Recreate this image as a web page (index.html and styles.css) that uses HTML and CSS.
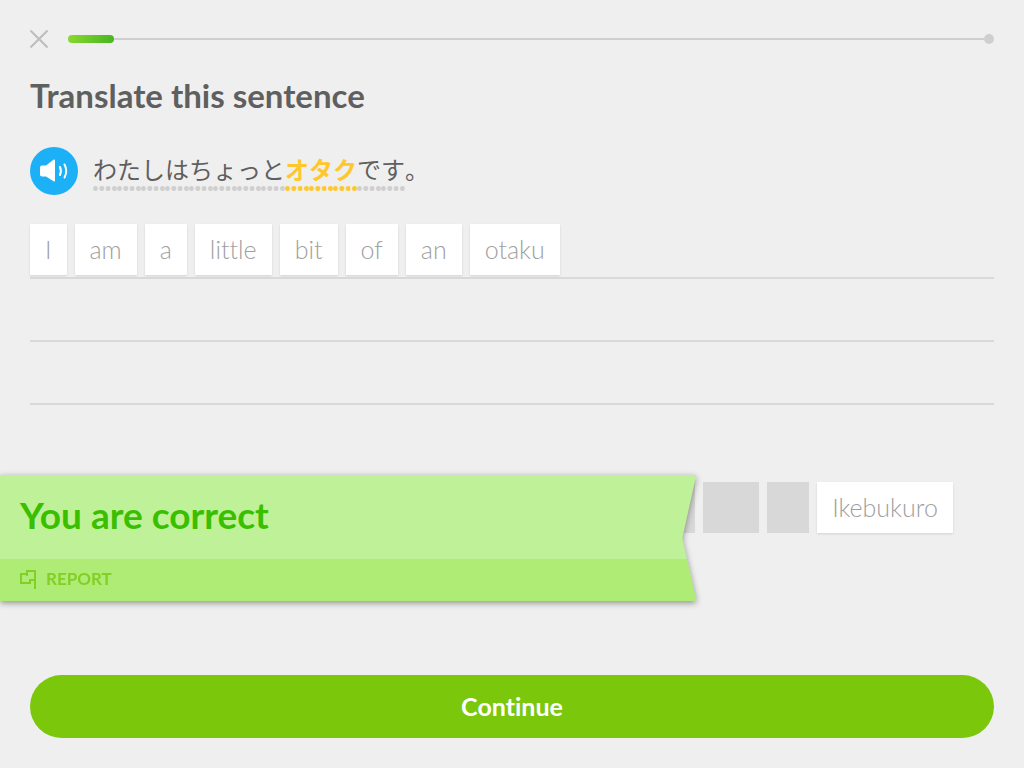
FILE: index.html
```html
<!DOCTYPE html>
<html lang="en">
  <head>
    <meta charset="UTF-8" />
    <meta name="viewport" content="width=device-width, initial-scale=1.0" />
    <title>Translate this sentence</title>
    <link rel="stylesheet" href="styles.css">
  </head>
  <body>
    <header class="lesson-header">
      <button class="close" type="button" aria-label="Close">
        <svg width="18" height="18" viewBox="0 0 18 18">
          <path d="M0.5 0.5L17.5 17.5M17.5 0.5L0.5 17.5" />
        </svg>
      </button>
      <div class="progress" role="progressbar" aria-label="Progress" aria-valuemin="0" aria-valuemax="100" aria-valuenow="5">
        <div class="progress-bar" style="width: 5%"></div>
        <div class="progress-track"></div>
        <div class="progress-end"></div>
      </div>
    </header>

    <main class="challenge">
      <h1>Translate this sentence</h1>

      <div class="prompt">
        <button class="speaker" type="button" aria-label="Listen">
          <svg width="48" height="48" viewBox="0 0 48 48">
            <path class="horn" d="M12 18.500H16L23.500 12.800Q25 11.800 25 13.500V33.500Q25 35.200 23.500 34.200L16 29.500H12Q10 29.500 10 27.500V20.500Q10 18.500 12 18.500Z" />
            <path class="wave" d="M30 20Q31.800 24 30 28M34.500 17.500Q38 24 34.500 30.500" />
          </svg>
        </button>
        <p class="sentence" lang="ja"><span>わ</span><span>た</span><span>し</span><span>は</span><span>ち</span><span>ょ</span><span>っ</span><span>と</span><span class="new">オ</span><span class="new">タ</span><span class="new">ク</span><span>で</span><span>す</span>。</p>
      </div>

      <div class="answer">
        <div class="answer-line">
          <button class="tile" type="button">I</button>
          <button class="tile" type="button">am</button>
          <button class="tile" type="button">a</button>
          <button class="tile" type="button">little</button>
          <button class="tile" type="button">bit</button>
          <button class="tile" type="button">of</button>
          <button class="tile" type="button">an</button>
          <button class="tile" type="button">otaku</button>
        </div>
        <div class="answer-line"></div>
        <div class="answer-line"></div>
      </div>

      <div class="bank-area">
        <div class="bank">
          <div class="slot wide"></div>
          <div class="slot wide"></div>
          <div class="slot wide"></div>
          <div class="slot wide"></div>
          <div class="slot"></div>
          <div class="slot small"></div>
          <button class="tile" type="button">Ikebukuro</button>
        </div>
        <div class="result">
          <div class="ribbon">
            <h2>You are correct</h2>
            <div class="ribbon-footer">
              <button class="report" type="button">
                <svg width="18" height="20" viewBox="0 0 18 20">
                  <path d="M15 20V2H7V5H1V14H10V11H15" />
                  <path d="M7 5V7" />
                </svg>
                REPORT
              </button>
            </div>
          </div>
        </div>
      </div>
    </main>

    <footer>
      <button class="continue" type="button">Continue</button>
    </footer>
  </body>
</html>
```

FILE: styles.css
```css
* {
  box-sizing: border-box;
}
body {
  display: flex;
  flex-direction: column;
  min-height: 100vh;
  margin: 0;
  padding: 30px;
  background-color: #efefef;
  color: #5f5f5f;
  font-family: Lato, "Noto Sans CJK JP", sans-serif;
  font-variant-ligatures: none;
}
button {
  margin: 0;
  padding: 0;
  border: none;
  background: none;
  font-family: inherit;
  font-variant-ligatures: inherit;
  cursor: pointer;
}
svg {
  display: block;
  fill: none;
}
.lesson-header {
  display: flex;
  align-items: center;
  gap: 20px;
}
.close path {
  stroke: #bdbdbd;
  stroke-width: 2;
}
.progress {
  display: flex;
  align-items: center;
  flex: 1;
}
.progress-bar {
  height: 8px;
  border-radius: 4px;
  background: linear-gradient(110deg, #8ad92f, #45b520);
}
.progress-track {
  flex: 1;
  height: 2px;
  background-color: #cfcfcf;
}
.progress-end {
  width: 10px;
  height: 10px;
  border-radius: 50%;
  background-color: #cfcfcf;
}
h1 {
  margin: 27px 0 32px;
  font-size: 33px;
  line-height: 40px;
  font-weight: 700;
}
.prompt {
  display: flex;
  align-items: center;
  gap: 15px;
}
.speaker {
  border-radius: 50%;
  background-color: #1cb0f6;
}
.speaker .horn {
  fill: #fff;
}
.speaker .wave {
  stroke: #fff;
  stroke-width: 2;
  stroke-linecap: round;
}
.sentence {
  display: flex;
  margin: 0;
  font-family: "Noto Sans CJK JP", sans-serif;
  font-size: 24px;
  line-height: 34px;
  font-weight: 400;
}
/* row of dots under each character */
.sentence span {
  padding-bottom: 5px;
  background-image: radial-gradient(circle, #cfcfcf 2px, transparent 3px);
  background-position: bottom;
  background-size: 5px 5px;
  background-repeat: space no-repeat;
}
.sentence .new {
  background-image: radial-gradient(circle, #ffc72e 2px, transparent 3px);
  color: #ffc72e;
  font-weight: 700;
}
.answer {
  margin-top: 21px;
}
.answer-line {
  display: flex;
  gap: 8px;
  height: 63px;
  padding-top: 8px;
  border-bottom: 2px solid #d9d9d9;
}
.tile {
  height: 51px;
  padding: 0 15px 2px;
  background-color: #fff;
  box-shadow: 0 1px 2px rgba(0, 0, 0, 0.12);
  color: #a0a0a0;
  font-size: 25px;
  font-weight: 300;
}
.bank-area {
  position: relative;
  margin-top: 77px;
}
.bank {
  display: flex;
  justify-content: center;
  gap: 8px;
}
.slot {
  width: 56px;
  height: 51px;
  background-color: #d8d8d8;
}
.slot.small {
  width: 42px;
}
.slot.wide {
  width: 150px;
}
/* ribbon lies over the word bank, flush with the window edge */
.result {
  position: absolute;
  top: -7px;
  left: -30px;
  width: 68vw;
  filter: drop-shadow(0 2px 3px rgba(0, 0, 0, 0.4));
}
.ribbon {
  background-color: #bff199;
  clip-path: polygon(0 0, 100% 0, calc(100% - 14px) 50%, 100% 100%, 0 100%);
}
.ribbon h2 {
  margin: 0;
  padding: 18px 20px 22px;
  color: #3abf00;
  font-size: 37px;
  line-height: 44px;
  font-weight: 700;
}
.ribbon-footer {
  padding: 10px 20px 12px;
  background-color: #afec75;
}
.report {
  display: flex;
  align-items: center;
  gap: 8px;
  color: #84cf26;
  font-size: 17px;
  line-height: 20px;
  font-weight: 700;
}
.report path {
  stroke: #84cf26;
  stroke-width: 2;
}
footer {
  margin-top: auto;
}
.continue {
  width: 100%;
  height: 63px;
  padding-bottom: 2px;
  border-radius: 32px;
  background-color: #7ac70c;
  color: #fff;
  font-size: 25px;
  font-weight: 700;
}
```
